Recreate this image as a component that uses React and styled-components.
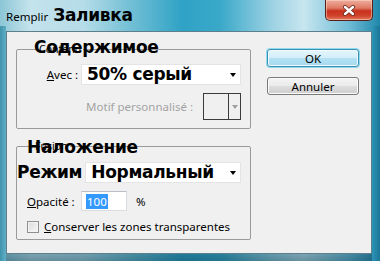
import React from 'react';
import styled, { createGlobalStyle } from 'styled-components';

const GlobalStyle = createGlobalStyle`
  html, body {
    margin: 0;
    padding: 0;
    background: #ffffff;
  }
  body {
    font-family: "Noto Sans", "Liberation Sans", sans-serif;
    font-size: 11.5px;
    color: #000;
  }
`;

const Window = styled.div`
  width: 380px;
  height: 261px;
  box-sizing: border-box;
  display: flex;
  flex-direction: column;
  padding: 0 8px 7px 6px;
  background:
    linear-gradient(90deg, #3f93ab, #5fb0c6) left 26px / 6px 100% no-repeat,
    linear-gradient(90deg, #2b95b8, #1b7596) right 26px / 8px 100% no-repeat,
    linear-gradient(180deg, rgba(255, 255, 255, 0) 0%, rgba(255, 255, 255, 0) 88%, rgba(10, 60, 80, 0.5) 100%),
    linear-gradient(90deg, #8cc6d6 0%, #c4e3ec 8%, #b5dce8 22%, #74c0d6 34%, #2fa2c5 48%, #3aa9c9 58%, #9fd3e4 72%, #c7e6ef 80%, #6ebbd5 92%, #1f87ab 100%);
`;

const TitleBar = styled.div`
  height: 31px;
  display: flex;
  align-items: flex-start;
  justify-content: space-between;
`;

const TitleText = styled.div`
  display: flex;
  align-items: baseline;
  gap: 5px;
  padding-top: 7px;
`;

const TitleSmall = styled.span`
  font-size: 11.5px;
  color: #000;
`;

const Overlay = styled.span`
  font-family: "DejaVu Sans", "Liberation Sans", sans-serif;
  font-weight: bold;
  font-size: 17px;
  letter-spacing: -0.3px;
  color: #000;
  line-height: 1;
  white-space: nowrap;
`;

const CloseButton = styled.div`
  width: 48px;
  height: 21px;
  margin-right: -1px;
  box-sizing: border-box;
  border: 1px solid #5a2018;
  border-top: none;
  border-radius: 0 0 5px 5px;
  background: linear-gradient(180deg, #eeae9c 0%, #de7a64 40%, #c8301a 55%, #d0452c 80%, #e27c60 100%);
  display: flex;
  align-items: center;
  justify-content: center;
  box-shadow: inset 0 0 0 1px rgba(255, 220, 210, 0.5);
`;

const Client = styled.div`
  flex: 1;
  display: flex;
  align-items: flex-start;
  box-sizing: border-box;
  border: 1px solid #5d7f8b;
  background: #f0f0f0;
  padding: 17px 0 0 9px;
`;

const LeftColumn = styled.div`
  width: 235px;
  display: flex;
  flex-direction: column;
  gap: 17px;
`;

const RightColumn = styled.div`
  margin-left: 16px;
  display: flex;
  flex-direction: column;
  gap: 10px;
`;

const Group = styled.div`
  position: relative;
  box-sizing: border-box;
  height: ${(p) => p.$height}px;
  border: 1px solid #9a9a9a;
  border-radius: 2px;
  padding: ${(p) => p.$top}px 9px 0 0;
  display: flex;
  flex-direction: column;
  gap: ${(p) => p.$gap}px;
`;

const Legend = styled.span`
  position: absolute;
  top: -7px;
  left: ${(p) => p.$left}px;
  padding: 0 2px;
  background: #f0f0f0;
  font-size: 10.5px;
  color: #000;
  line-height: 13px;
`;

const LegendOverlay = styled(Overlay)`
  position: absolute;
  top: ${(p) => p.$top}px;
  left: ${(p) => p.$left}px;
`;

const Row = styled.div`
  display: flex;
  align-items: center;
  justify-content: ${(p) => (p.$start ? 'flex-start' : 'flex-end')};
  gap: ${(p) => p.$gap}px;
  padding-left: ${(p) => p.$pad || 0}px;
`;

const Label = styled.span`
  font-size: 11.5px;
  color: ${(p) => (p.$disabled ? '#a3a3a3' : '#000')};
  white-space: nowrap;
  width: ${(p) => (p.$width ? `${p.$width}px` : 'auto')};
  margin-left: ${(p) => p.$offset || 0}px;
`;

const Select = styled.div`
  width: 160px;
  height: 21px;
  box-sizing: border-box;
  background: #ffffff;
  border: 1px solid #e4e4e4;
  display: flex;
  align-items: center;
  justify-content: space-between;
  padding: 0 4px 0 5px;
`;

const Arrow = styled.span`
  width: 0;
  height: 0;
  border-left: 3.5px solid transparent;
  border-right: 3.5px solid transparent;
  border-top: 4px solid ${(p) => p.$color || '#000'};
`;

const Swatch = styled.div`
  width: 38px;
  height: 27px;
  box-sizing: border-box;
  border: 1px solid #3c3c3c;
  background: #f0f0f0;
  display: grid;
  grid-template-columns: 1fr 12px;
`;

const SwatchArrow = styled.div`
  border-left: 1px solid #3c3c3c;
  display: flex;
  align-items: center;
  justify-content: center;
`;

const NumberInput = styled.div`
  width: 46px;
  height: 20px;
  box-sizing: border-box;
  background: #ffffff;
  border: 1px solid #d8dde2;
  border-top-color: #b8bec4;
  display: flex;
  align-items: center;
  padding-left: 4px;
`;

const Selected = styled.span`
  background: #3399ff;
  color: #ffffff;
  font-size: 11.5px;
  line-height: 15px;
  padding: 0 1px;
`;

const CheckBox = styled.span`
  width: 12px;
  height: 12px;
  box-sizing: border-box;
  border: 1px solid #8f8f8f;
  background: linear-gradient(135deg, #dcdcdc 0%, #f6f6f6 100%);
  box-shadow: inset 0 0 0 1px #f4f4f4;
`;

const Button = styled.div`
  width: 92px;
  height: 18px;
  box-sizing: border-box;
  border-radius: 3px;
  border: 1px solid ${(p) => (p.$primary ? '#3c8fb0' : '#7a7a7a')};
  background: ${(p) =>
    p.$primary
      ? 'linear-gradient(180deg, #e6f6fc 0%, #d2eef9 48%, #b4e1f3 52%, #a6d9ef 100%)'
      : 'linear-gradient(180deg, #f4f4f4 0%, #ebebeb 48%, #dddddd 52%, #cfcfcf 100%)'};
  box-shadow: ${(p) => (p.$primary ? '0 0 0 1px #8fdcf0, inset 0 0 0 1px #effaff' : 'inset 0 0 0 1px #fbfbfb')};
  display: flex;
  align-items: center;
  justify-content: center;
  font-size: 11.5px;
  color: #000;
`;

const CloseIcon = () => (
  <svg width="14" height="11" viewBox="0 0 14 11">
    <path d="M3 2 L11 9 M11 2 L3 9" stroke="#6a2a20" strokeWidth="4" strokeLinecap="round" />
    <path d="M3 2 L11 9 M11 2 L3 9" stroke="#ffffff" strokeWidth="2.4" strokeLinecap="round" />
  </svg>
);

export default function App() {
  return (
    <>
      <GlobalStyle />
      <Window>
        <TitleBar>
          <TitleText>
            <TitleSmall>Remplir</TitleSmall>
            <Overlay>Заливка</Overlay>
          </TitleText>
          <CloseButton>
            <CloseIcon />
          </CloseButton>
        </TitleBar>
        <Client>
          <LeftColumn>
            <Group $height={80} $top={14} $gap={8}>
              <Legend $left={20}>Contenu</Legend>
              <LegendOverlay $left={17} $top={-11}>Содержимое</LegendOverlay>
              <Row $gap={3}>
                <Label>
                  <u>A</u>vec :
                </Label>
                <Select>
                  <Overlay>50% серый</Overlay>
                  <Arrow />
                </Select>
              </Row>
              <Row $gap={10}>
                <Label $disabled>Motif personnalisé :</Label>
                <Swatch>
                  <span />
                  <SwatchArrow>
                    <Arrow $color="#a0a0a0" />
                  </SwatchArrow>
                </Swatch>
              </Row>
            </Group>
            <Group $height={94} $top={15} $gap={8}>
              <Legend $left={16}>Fusion</Legend>
              <LegendOverlay $left={10} $top={-8}>Наложение</LegendOverlay>
              <Row $gap={3}>
                <Overlay>Режим</Overlay>
                <Select>
                  <Overlay>Нормальный</Overlay>
                  <Arrow />
                </Select>
              </Row>
              <Row $start $pad={10} $gap={0}>
                <Label $width={54}>
                  <u>O</u>pacité :
                </Label>
                <NumberInput>
                  <Selected>100</Selected>
                </NumberInput>
                <Label $offset={9}>%</Label>
              </Row>
              <Row $start $pad={10} $gap={5}>
                <CheckBox />
                <Label>
                  <u>C</u>onserver les zones transparentes
                </Label>
              </Row>
            </Group>
          </LeftColumn>
          <RightColumn>
            <Button $primary>OK</Button>
            <Button>Annuler</Button>
          </RightColumn>
        </Client>
      </Window>
    </>
  );
}
